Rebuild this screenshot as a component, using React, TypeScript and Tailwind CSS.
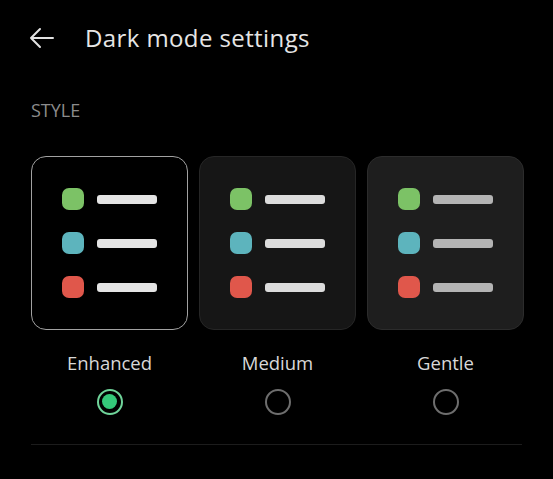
import { useState } from 'react';

type Variant = {
  id: string;
  label: string;
  card: string;
  bar: string;
};

const variants: Variant[] = [
  { id: 'enhanced', label: 'Enhanced', card: 'bg-black border-[1.5px] border-[#a2a2a2]', bar: 'bg-[#e4e4e4]' },
  { id: 'medium', label: 'Medium', card: 'bg-[#161616] border border-[#262626]', bar: 'bg-[#dcdcdc]' },
  { id: 'gentle', label: 'Gentle', card: 'bg-[#1e1e1e] border border-[#2c2c2c]', bar: 'bg-[#b4b4b4]' },
];

const dots = ['bg-[#7cc266]', 'bg-[#5db4bd]', 'bg-[#e0574b]'];

function Preview({ variant }: { variant: Variant }) {
  return (
    <div className={`h-[174px] rounded-[15px] flex flex-col items-center justify-center gap-[22px] ${variant.card}`}>
      {dots.map(dot => (
        <div key={dot} className="flex items-center gap-[13px]">
          <div className={`w-[22px] h-[22px] rounded-[7px] ${dot}`} />
          <div className={`w-[60px] h-[9px] rounded-[3px] ${variant.bar}`} />
        </div>
      ))}
    </div>
  );
}

function Radio({ checked }: { checked: boolean }) {
  return checked ? (
    <div className="w-[26px] h-[26px] rounded-full border-2 border-[#6fd49a] flex items-center justify-center">
      <div className="w-[15px] h-[15px] rounded-full bg-[#34c979]" />
    </div>
  ) : (
    <div className="w-[26px] h-[26px] rounded-full border-2 border-[#6e6e6e]" />
  );
}

export default function App() {
  const [selected, setSelected] = useState('enhanced');

  return (
    <div className="w-[553px] h-[479px] bg-black overflow-hidden font-['Open_Sans',sans-serif]">
      {/* Header */}
      <div className="flex items-center h-[40px] mt-[18px] pl-[29px]">
        <svg width="25" height="22" viewBox="0 0 25 22" fill="none" stroke="#e2e2e2" strokeWidth="2" strokeLinecap="round" strokeLinejoin="round">
          <path d="M24 11H2M11 2L2 11l9 9" />
        </svg>
        <h1 className="ml-[31px] text-[24px] tracking-[0.4px] text-[#e6e6e6] leading-none">Dark mode settings</h1>
      </div>

      {/* Section label */}
      <div className="pl-[31px] mt-[43px] text-[18px] leading-none text-[#8c8c8c]">STYLE</div>

      {/* Style options */}
      <div className="grid grid-cols-3 gap-[11px] pl-[31px] pr-[29px] mt-[37px]">
        {variants.map(v => (
          <button key={v.id} onClick={() => setSelected(v.id)} className="flex flex-col text-left">
            <Preview variant={v} />
            <span className="mt-[24px] text-center text-[18.5px] leading-none text-[#d8d8d8]">{v.label}</span>
            <span className="mt-[16px] flex justify-center">
              <Radio checked={selected === v.id} />
            </span>
          </button>
        ))}
      </div>

      <div className="mx-[31px] mt-[29px] h-px bg-[#1c1c1c]" />
    </div>
  );
}
